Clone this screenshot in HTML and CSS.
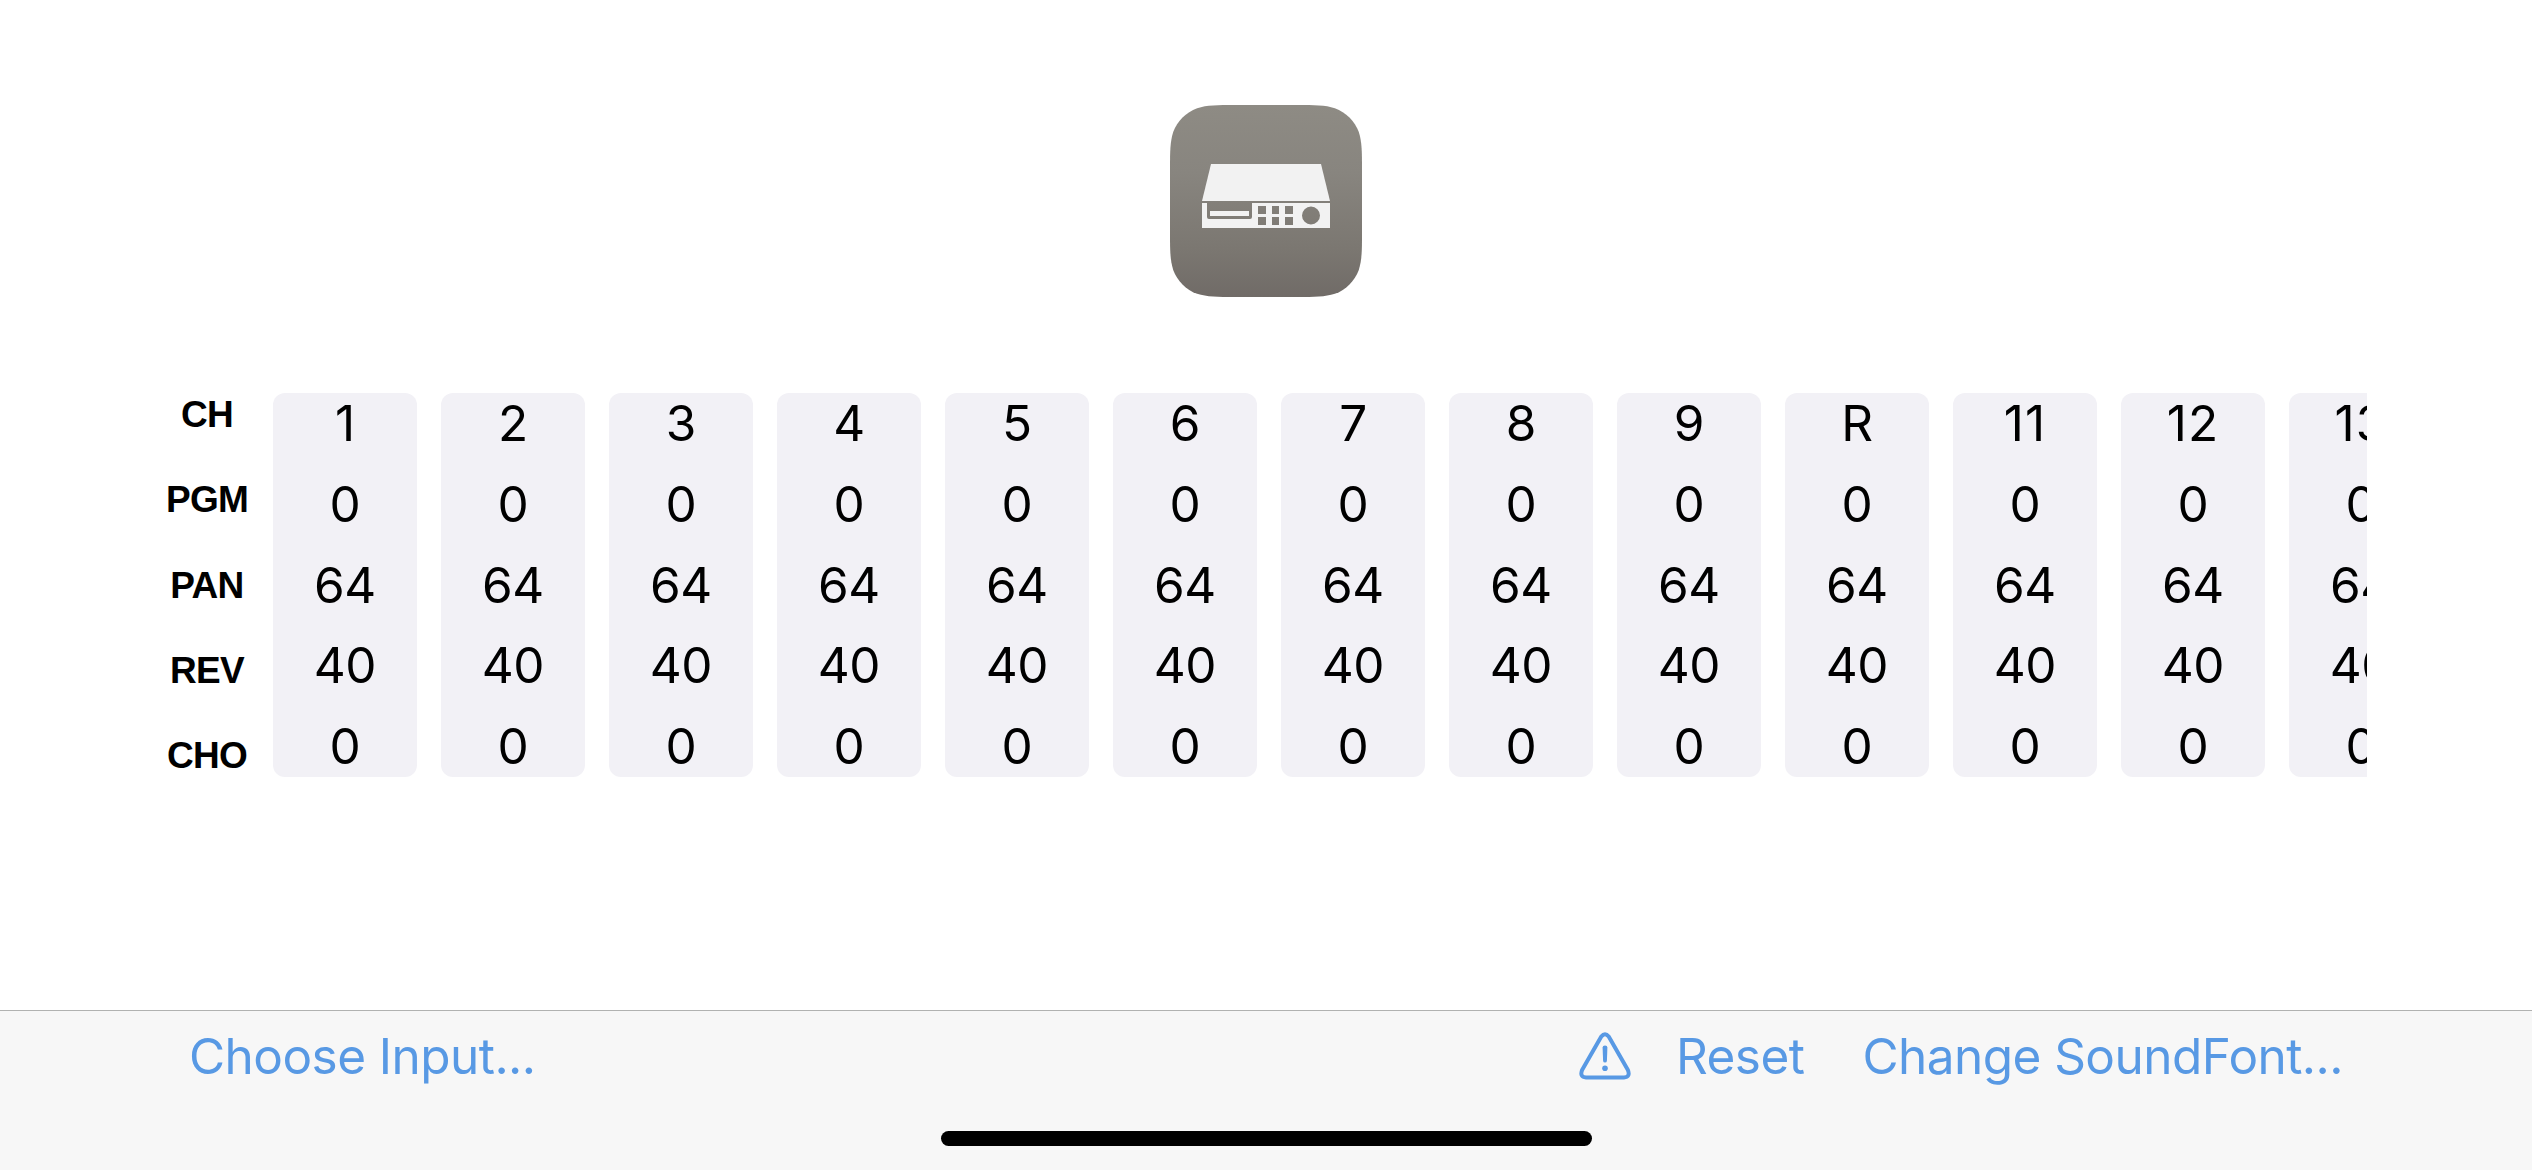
FILE: index.html
```html
<!DOCTYPE html>
<html lang="en">
<head>
<meta charset="utf-8">
<title>Sound Module</title>
<link rel="stylesheet" href="styles.css">
</head>
<body>
<main class="screen">
  <header class="hero">
    <svg class="app-icon" viewBox="0 0 192 192" role="img" aria-label="Sound module">
      <defs>
        <linearGradient id="shell" x1="0" y1="0" x2="0" y2="1">
          <stop offset="0" stop-color="#8e8b84"/>
          <stop offset="0.35" stop-color="#88857f"/>
          <stop offset="0.75" stop-color="#7b7771"/>
          <stop offset="1" stop-color="#706b67"/>
        </linearGradient>
      </defs>
      <path fill="url(#shell)" d="M0 65.700C0 46.800 0 37.300 3.200 27.100C7.300 16 16 7.300 27.100 3.200C37.300 0 46.800 0 65.700 0H126.300C145.200 0 154.700 0 164.900 3.200C176 7.300 184.700 16 188.800 27.100C192 37.300 192 46.800 192 65.700V126.300C192 145.200 192 154.700 188.800 164.900C184.700 176 176 184.700 164.900 188.800C154.700 192 145.200 192 126.300 192H65.700C46.800 192 37.300 192 27.100 188.800C16 184.700 7.300 176 3.200 164.900C0 154.700 0 145.200 0 126.300Z"/>
      <path fill="#f2f2f2" d="M41 59H151L160 96H32Z"/>
      <path fill="#f2f2f2" fill-rule="evenodd" d="M32 98H37V112Q37 114 39 114H80Q82 114 82 112V98H160V123H32ZM88 101V109H96V101ZM102 101V109H109V101ZM115 101V109H123V101ZM88 112V120H96V112ZM102 112V120H109V112ZM115 112V120H123V112ZM141 101.500A9 9 0 1 0 141 119.500A9 9 0 1 0 141 101.500Z"/>
      <path fill="#f2f2f2" d="M40 106H79V111H40Z"/>
    </svg>
  </header>

  <section class="mixer">
    <div class="labels"><span>CH</span><span>PGM</span><span>PAN</span><span>REV</span><span>CHO</span></div>
    <div class="strips">
      <div class="strip"><span>1</span><span>0</span><span>64</span><span>40</span><span>0</span></div>
      <div class="strip"><span>2</span><span>0</span><span>64</span><span>40</span><span>0</span></div>
      <div class="strip"><span>3</span><span>0</span><span>64</span><span>40</span><span>0</span></div>
      <div class="strip"><span>4</span><span>0</span><span>64</span><span>40</span><span>0</span></div>
      <div class="strip"><span>5</span><span>0</span><span>64</span><span>40</span><span>0</span></div>
      <div class="strip"><span>6</span><span>0</span><span>64</span><span>40</span><span>0</span></div>
      <div class="strip"><span>7</span><span>0</span><span>64</span><span>40</span><span>0</span></div>
      <div class="strip"><span>8</span><span>0</span><span>64</span><span>40</span><span>0</span></div>
      <div class="strip"><span>9</span><span>0</span><span>64</span><span>40</span><span>0</span></div>
      <div class="strip"><span>R</span><span>0</span><span>64</span><span>40</span><span>0</span></div>
      <div class="strip"><span class="wide">11</span><span>0</span><span>64</span><span>40</span><span>0</span></div>
      <div class="strip"><span class="wide">12</span><span>0</span><span>64</span><span>40</span><span>0</span></div>
      <div class="strip"><span class="wide">13</span><span>0</span><span>64</span><span>40</span><span>0</span></div>
    </div>
  </section>

  <footer class="toolbar">
    <nav class="actions">
      <a class="action choose">Choose Input...</a>
      <svg class="warning" viewBox="0 0 52 48" role="img" aria-label="Warning">
        <path d="M22.300 4.600Q26 0 29.700 4.600L48.900 38Q51.600 45 45 45.400H7Q0.400 45 3.100 38Z" fill="none" stroke="currentColor" stroke-width="4" stroke-linejoin="round"/>
        <path d="M23.600 15.500Q23.600 13.500 26 13.500T28.400 15.500L27.900 29Q27.700 30.600 26 30.600T24.100 29Z" fill="currentColor"/>
        <circle cx="26" cy="36.300" r="2.800" fill="currentColor"/>
      </svg>
      <a class="action reset">Reset</a>
      <a class="action change">Change SoundFont...</a>
    </nav>
    <div class="home-indicator"></div>
  </footer>
</main>
</body>
</html>
```
FILE: styles.css
```css
* {
  box-sizing: border-box;
}

body {
  margin: 0;
  background: #fff;
  color: #000;
  font-family: Inter, "Liberation Sans", sans-serif;
}

.screen {
  display: flex;
  flex-direction: column;
  width: 2532px;
  height: 1170px;
  overflow: hidden;
}

.hero {
  display: flex;
  justify-content: center;
  padding: 105px 0 96px;
}

.app-icon {
  width: 192px;
  height: 192px;
}

.mixer {
  display: flex;
  gap: 24px;
  padding: 0 165px;
}

.labels {
  display: flex;
  flex: none;
  flex-direction: column;
  align-items: center;
  justify-content: space-between;
  width: 84px;
  height: 385px;
  font: bold 37px/44px "Liberation Sans", Arial, sans-serif;
  letter-spacing: -0.7px;
}

.strips {
  display: flex;
  flex: 1;
  gap: 24px;
  min-width: 0;
  overflow: hidden;
}

.strip {
  display: flex;
  flex: none;
  flex-direction: column;
  align-items: center;
  justify-content: space-between;
  width: 144px;
  height: 384px;
  border-radius: 12px;
  background: #f2f1f6;
  font-size: 49.5px;
  line-height: 61px;
  letter-spacing: -0.3px;
}

.wide {
  letter-spacing: 1.2px;
}

.toolbar {
  display: flex;
  flex-direction: column;
  align-items: center;
  justify-content: space-between;
  height: 160px;
  margin-top: auto;
  padding-bottom: 24px;
  border-top: 1px solid #b1b2b1;
  background: #f7f7f7;
}

.actions {
  display: flex;
  align-items: center;
  width: 100%;
  padding: 15px 189px 0;
  color: #5899e4;
}

.action {
  font-size: 49.5px;
  line-height: 60px;
  letter-spacing: -0.55px;
  white-space: nowrap;
}

.choose {
  margin-right: auto;
}

.warning {
  flex: none;
  width: 52px;
  height: 48px;
}

.reset {
  margin: 0 58px 0 45px;
}

.home-indicator {
  width: 651px;
  height: 15px;
  border-radius: 8px;
  background: #000;
}
```
